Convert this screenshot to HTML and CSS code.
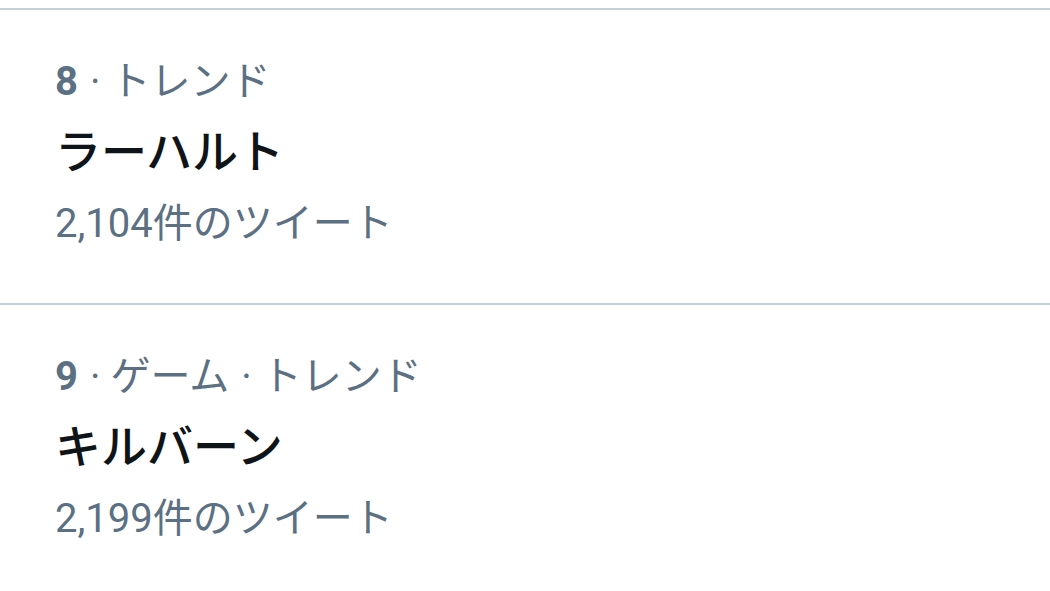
FILE: index.html
```html
<!DOCTYPE html>
<html lang="ja">
<head>
<meta charset="utf-8">
<link rel="stylesheet" href="styles.css">
</head>
<body>
<div class="list">
  <div class="trend">
    <div class="meta"><span class="rank">8</span><span class="sep">·</span>トレンド</div>
    <div class="name">ラーハルト</div>
    <div class="count">2,104件のツイート</div>
  </div>
  <div class="trend">
    <div class="meta"><span class="rank">9</span><span class="sep">·</span>ゲーム<span class="sep">·</span>トレンド</div>
    <div class="name">キルバーン</div>
    <div class="count">2,199件のツイート</div>
  </div>
</div>
</body>
</html>
```
FILE: styles.css
```css
html, body {
  margin: 0;
  padding: 0;
  background: #ffffff;
}
body {
  font-family: Roboto, "Noto Sans CJK JP", sans-serif;
  padding-top: 8px;
}
.list {
  display: flex;
  flex-direction: column;
}
.trend {
  border-top: 2px solid #c4cfd6;
  padding: 36px 55px 44px;
  display: flex;
  flex-direction: column;
}
.meta, .count {
  color: #5b7083;
  font-size: 40px;
  line-height: 71px;
}
.rank {
  font-weight: 700;
}
.sep {
  padding: 0 10px 0 12px;
}
.name {
  color: #0f1419;
  font-size: 46px;
  font-weight: 500;
  line-height: 71px;
}
```
